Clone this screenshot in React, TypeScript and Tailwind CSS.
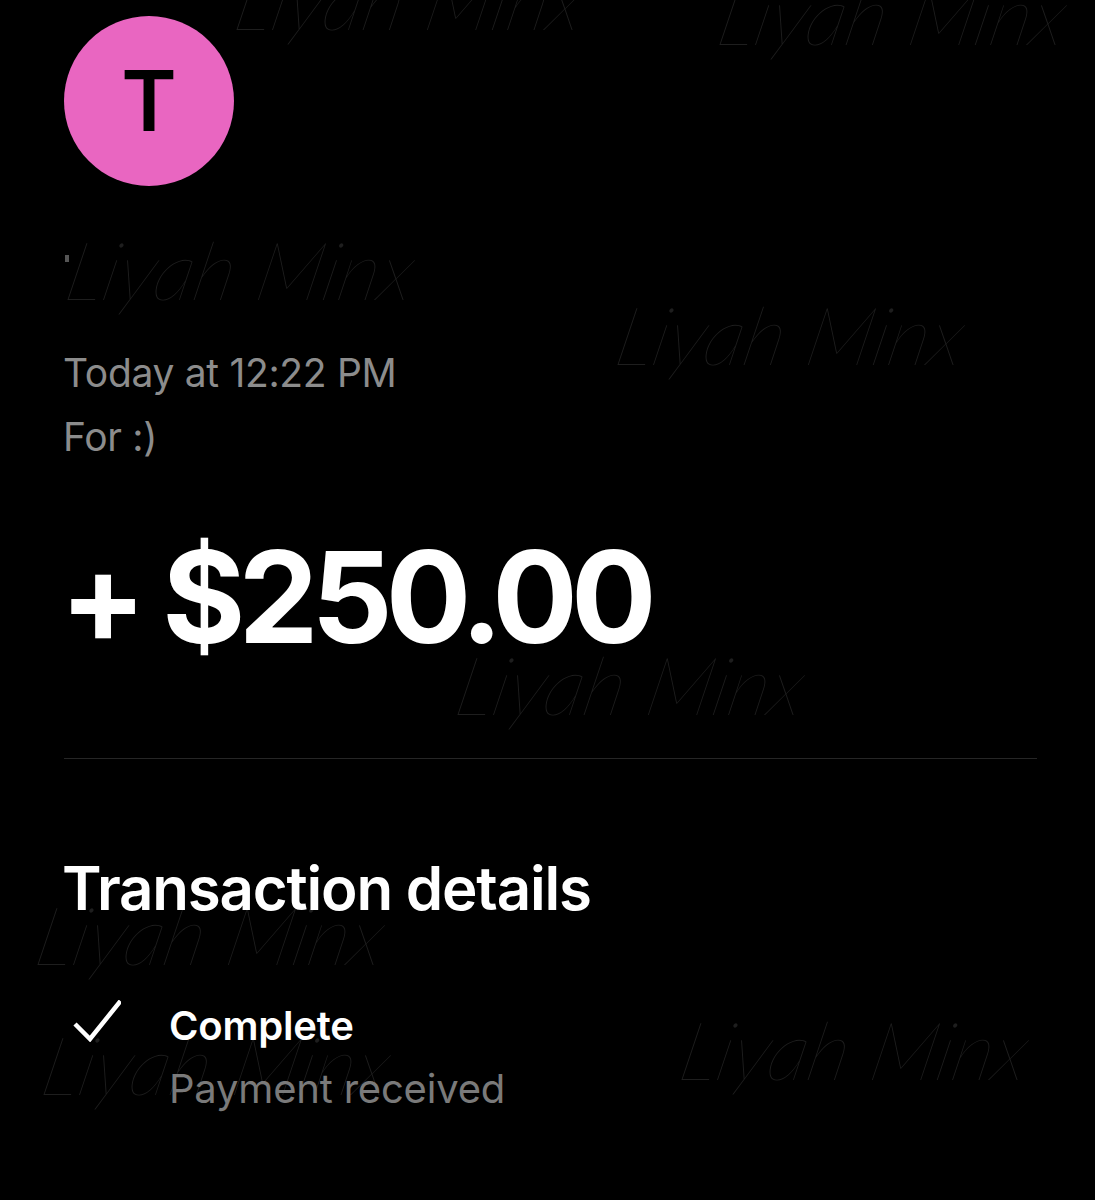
import React from 'react';

const marks = [
  'left-[237px] top-[-61px]',
  'left-[720px] top-[-46px]',
  'left-[68px] top-[209px]',
  'left-[618px] top-[274px]',
  'left-[458px] top-[624px]',
  'left-[38px] top-[874px]',
  'left-[44px] top-[1004px]',
  'left-[682px] top-[989px]',
];

export default function App() {
  return (
    <div className="relative h-[1200px] w-full overflow-hidden bg-black pl-[64px] pr-[58px] pt-[16px] font-['Inter',sans-serif] text-white">
      {/* Watermarks */}
      {marks.map(pos => (
        <span
          key={pos}
          className={`absolute ${pos} -skew-x-12 whitespace-nowrap font-['Lato',sans-serif] text-[81px] font-thin italic leading-[120px] text-[#1e1e1e]`}
        >
          Liyah Minx
        </span>
      ))}

      <div className="relative">
        <div className="flex h-[170px] w-[170px] items-center justify-center rounded-full bg-[#e966c1] text-[84px] font-semibold leading-none text-black">
          T
        </div>

        <div className="ml-[1px] mt-[69px] h-[7px] w-[4px] bg-[#555555]" />

        <div className="-ml-[1px] mt-[79px] text-[39px] leading-[64px] tracking-[-0.008em] text-[#8c8c8c]">
          <p>Today at 12:22 PM</p>
          <p>For :)</p>
        </div>

        <div className="-ml-[4px] mt-[53px] h-[150px] text-[127px] font-bold leading-[150px] tracking-[-0.055em]">+ $250.00</div>

        <div className="mt-[86px] h-px bg-[#262626]" />

        <h2 className="-ml-[2px] mt-[91px] text-[60px] font-semibold leading-[76px] tracking-[-0.02em]">Transaction details</h2>

        <div className="mt-[68px] flex gap-[48px]">
          <svg viewBox="0 0 48 42" className="ml-[9px] mt-[6px] h-[42px] w-[48px] shrink-0" fill="none" stroke="#ffffff" strokeWidth="4.5">
            <path d="M2 24 L17 39 L47.5 1" />
          </svg>
          <div className="text-[40px] leading-[63px] tracking-[-0.005em]">
            <p className="font-semibold">Complete</p>
            <p className="text-[#7a7a7a]">Payment received</p>
          </div>
        </div>
      </div>
    </div>
  );
}
